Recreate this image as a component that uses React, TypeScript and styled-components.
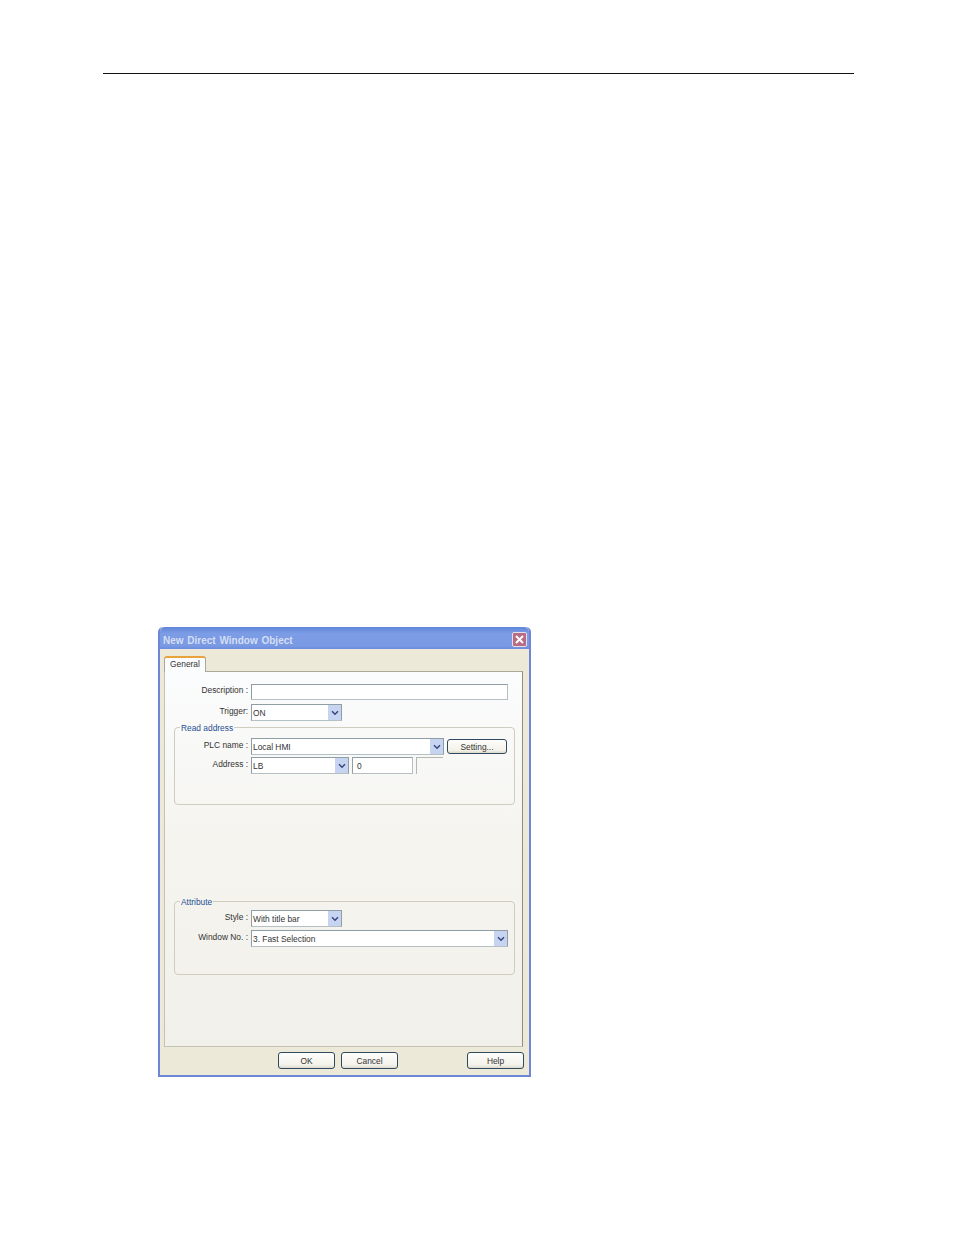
import React from 'react'
import styled, { createGlobalStyle } from 'styled-components'

const GlobalStyle = createGlobalStyle`
  html, body {
    margin: 0;
    padding: 0;
    background: #fff;
  }
`

const PageStyled = styled.div`
  width: 954px;
  height: 1235px;
  box-sizing: border-box;
  padding: 73px 100px 0 103px;
  overflow: hidden;
  font-family: "Liberation Sans", sans-serif;
  font-size: 8.4px;
  color: #333;
`

const RuleStyled = styled.div`
  height: 1px;
  background: #111;
`

const DialogStyled = styled.div`
  width: 373px;
  height: 450px;
  box-sizing: border-box;
  margin: 553px 0 0 55px;
  display: flex;
  flex-direction: column;
  background: #ece9d8;
  border: 2px solid #6f86d6;
  border-top: 0;
  border-radius: 5px 5px 0 0;
`

const TitleBarStyled = styled.div`
  height: 22px;
  flex: none;
  display: flex;
  align-items: center;
  justify-content: space-between;
  padding: 3px 2px 0 3px;
  box-sizing: border-box;
  background: linear-gradient(#5f85da, #7c9de6 30%, #7a9ae4 85%, #6c8cdc);
  border-radius: 5px 5px 0 0;
`

const TitleStyled = styled.div`
  padding-top: 2px;
  font-size: 10px;
  font-weight: 700;
  color: #d5def3;
  word-spacing: 1px;
`

const CloseStyled = styled.div`
  width: 15px;
  height: 15px;
  display: flex;
  align-items: center;
  justify-content: center;
  background: #b86b84;
  border: 1px solid #e6dfe8;
  border-radius: 2px;
  box-sizing: border-box;
`

const ContentStyled = styled.div`
  flex: 1;
  display: flex;
  flex-direction: column;
  padding: 0 6px 0 4px;
`

const TabStripStyled = styled.div`
  height: 22px;
  flex: none;
  display: flex;
  align-items: flex-end;
`

const TabStyled = styled.div`
  width: 42px;
  height: 16px;
  margin-bottom: -1px;
  padding-bottom: 3px;
  box-sizing: border-box;
  display: flex;
  align-items: center;
  justify-content: center;
  background: #fbfcfd;
  border: 1px solid #a9a89a;
  border-bottom: 0;
  border-top: 2px solid #e8a33d;
  border-radius: 3px 3px 0 0;
  position: relative;
  z-index: 1;
`

const PanelStyled = styled.div`
  height: 376px;
  flex: none;
  box-sizing: border-box;
  padding: 12px 7px 0 0;
  background: linear-gradient(#fbfcfd, #f5f4ef 45%, #f2f0ea);
  border: 1px solid #c4c2b4;
  border-top-color: #a9a89a;
  border-right-color: #8f8e80;
`

const RowStyled = styled.div<{ $top?: number }>`
  display: flex;
  align-items: center;
  gap: 3px;
  margin-top: ${props => props.$top ?? 0}px;
`

const LabelStyled = styled.div<{ $width: number }>`
  width: ${props => props.$width}px;
  flex: none;
  padding-bottom: 4px;
  text-align: right;
  white-space: nowrap;
`

const InputStyled = styled.div<{ $width: number; $height?: number }>`
  width: ${props => props.$width}px;
  height: ${props => props.$height ?? 17}px;
  flex: none;
  box-sizing: border-box;
  display: flex;
  align-items: center;
  padding-left: 4px;
  background: #fff;
  border: 1px solid #8f9ea6;
  border-bottom-color: #b5c0c4;
  border-right-color: #b5c0c4;
`

const SelectStyled = styled.div<{ $width: number }>`
  width: ${props => props.$width}px;
  height: 17px;
  flex: none;
  box-sizing: border-box;
  display: flex;
  align-items: center;
  justify-content: space-between;
  padding-left: 1px;
  background: #fff;
  border: 1px solid #8f9ea6;
  border-bottom-color: #b5c0c4;
`

const ArrowStyled = styled.div`
  width: 13px;
  height: 15px;
  display: flex;
  align-items: center;
  justify-content: center;
  background: #c6d4f2;
`

const GroupStyled = styled.fieldset<{ $height: number; $top: number }>`
  height: ${props => props.$height}px;
  box-sizing: border-box;
  margin: ${props => props.$top}px 0 0 9px;
  padding: 0;
  border: 1px solid #cfccc0;
  border-radius: 4px;
`

const LegendStyled = styled.legend`
  position: relative;
  top: 1px;
  margin-left: 5px;
  padding: 0 1px;
  color: #1f4f95;
  line-height: 9px;
`

const ButtonStyled = styled.div<{ $width: number; $height?: number }>`
  width: ${props => props.$width}px;
  height: ${props => props.$height ?? 17}px;
  flex: none;
  box-sizing: border-box;
  display: flex;
  align-items: center;
  justify-content: center;
  background: linear-gradient(#fdfdfb, #f3f2ea 80%, #dcd8cc);
  border: 1px solid #2f4a5e;
  border-radius: 3px;
`

const EmptyBoxStyled = styled.div`
  width: 27px;
  height: 17px;
  flex: none;
  box-sizing: border-box;
  border-top: 1px solid #b5b8b0;
  border-left: 1px solid #b5b8b0;
`

const FooterStyled = styled.div`
  flex: 1;
  display: flex;
  align-items: flex-start;
  padding: 5px 0 0 114px;
  gap: 6px;
`

const HelpGapStyled = styled.div`
  width: 57px;
  flex: none;
`

function Chevron() {
  return (
    <svg width="8" height="6" viewBox="0 0 8 6">
      <path d="M1 1.2 L4 4.2 L7 1.2" fill="none" stroke="#34487c" strokeWidth="1.5" />
    </svg>
  )
}

function Select({ width, value }: { width: number; value: string }) {
  return (
    <SelectStyled $width={width}>
      {value}
      <ArrowStyled>
        <Chevron />
      </ArrowStyled>
    </SelectStyled>
  )
}

export default function App() {
  return (
    <PageStyled>
      <GlobalStyle />
      <RuleStyled />
      <DialogStyled>
        <TitleBarStyled>
          <TitleStyled>New Direct Window Object</TitleStyled>
          <CloseStyled>
            <svg width="9" height="9" viewBox="0 0 9 9">
              <path d="M1 1 L8 8 M8 1 L1 8" stroke="#fff" strokeWidth="2" />
            </svg>
          </CloseStyled>
        </TitleBarStyled>
        <ContentStyled>
          <TabStripStyled>
            <TabStyled>General</TabStyled>
          </TabStripStyled>
          <PanelStyled>
            <RowStyled>
              <LabelStyled $width={83}>Description :</LabelStyled>
              <InputStyled $width={257} $height={16} />
            </RowStyled>
            <RowStyled $top={4}>
              <LabelStyled $width={83}>Trigger:</LabelStyled>
              <Select width={91} value="ON" />
            </RowStyled>
            <GroupStyled $height={82} $top={2}>
              <LegendStyled>Read address</LegendStyled>
              <RowStyled $top={6}>
                <LabelStyled $width={73}>PLC name :</LabelStyled>
                <Select width={193} value="Local HMI" />
                <ButtonStyled $width={60} $height={15}>Setting...</ButtonStyled>
              </RowStyled>
              <RowStyled $top={2}>
                <LabelStyled $width={73}>Address :</LabelStyled>
                <Select width={98} value="LB" />
                <InputStyled $width={61}>0</InputStyled>
                <EmptyBoxStyled />
              </RowStyled>
            </GroupStyled>
            <GroupStyled $height={78} $top={92}>
              <LegendStyled>Attribute</LegendStyled>
              <RowStyled $top={4}>
                <LabelStyled $width={73}>Style :</LabelStyled>
                <Select width={91} value="With title bar" />
              </RowStyled>
              <RowStyled $top={3}>
                <LabelStyled $width={73}>Window No. :</LabelStyled>
                <Select width={257} value="3. Fast Selection" />
              </RowStyled>
            </GroupStyled>
          </PanelStyled>
          <FooterStyled>
            <ButtonStyled $width={57}>OK</ButtonStyled>
            <ButtonStyled $width={57}>Cancel</ButtonStyled>
            <HelpGapStyled />
            <ButtonStyled $width={57}>Help</ButtonStyled>
          </FooterStyled>
        </ContentStyled>
      </DialogStyled>
    </PageStyled>
  )
}
